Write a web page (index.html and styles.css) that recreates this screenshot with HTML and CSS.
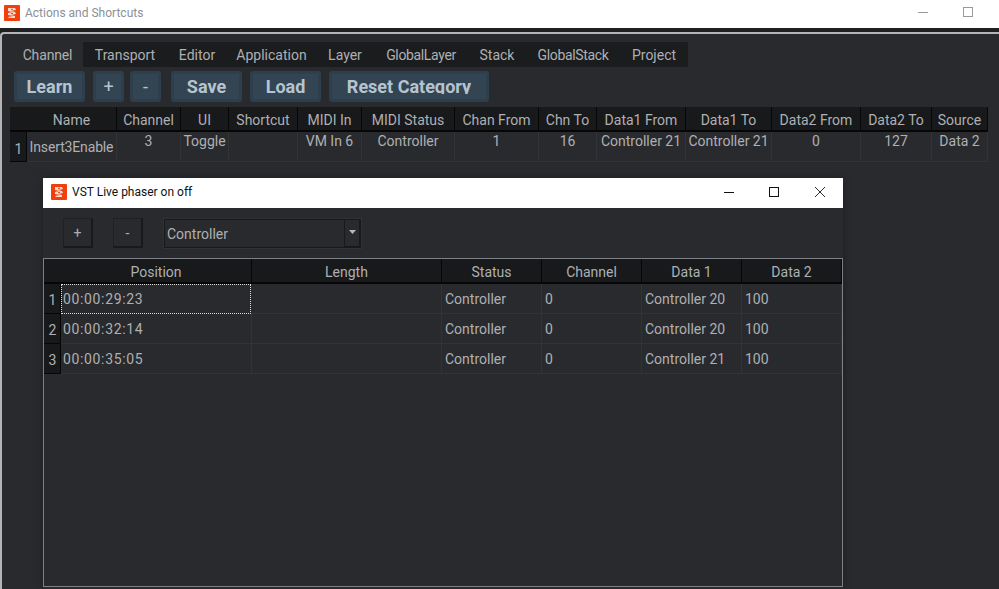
FILE: index.html
```html
<!DOCTYPE html>
<html lang="en">
<head>
<meta charset="utf-8">
<title>Actions and Shortcuts</title>
<link rel="stylesheet" href="styles.css">
</head>
<body>
<div class="main-title">
  <svg class="app-icon" viewBox="0 0 16 16"><rect width="16" height="16" rx="1" fill="#ee3f0c"/><path d="M4 3h7l1 2-5 1 4 1 1 2-5 1 4 1v2H5l-1-1 5-1-5-1V8l4-1-4-1z" fill="#f9d9cc"/><path d="M7 4.300h2M7 8.400h2" stroke="#ee3f0c"/></svg>
  <span class="main-title-text">Actions and Shortcuts</span>
  <svg class="wc-min" viewBox="0 0 10 10"><path d="M0 5.500h10" stroke="#9a9a9a"/></svg>
  <svg class="wc-max" viewBox="0 0 10 10"><rect x=".5" y=".5" width="9" height="9" fill="none" stroke="#9a9a9a"/></svg>
</div>
<div class="main-strip">
  <div class="main-frame">
    <div class="tabs">
      <div class="tab tab-active">Channel</div>
      <div class="tab-rest">
        <div class="tab t1">Transport</div>
        <div class="tab t2">Editor</div>
        <div class="tab t3">Application</div>
        <div class="tab t4">Layer</div>
        <div class="tab t5">GlobalLayer</div>
        <div class="tab t6">Stack</div>
        <div class="tab t7">GlobalStack</div>
        <div class="tab t8">Project</div>
      </div>
    </div>
    <div class="toolbar">
      <div class="btn btn-w">Learn</div>
      <div class="btn btn-s">+</div>
      <div class="btn btn-s btn-minus">-</div>
      <div class="btn btn-w">Save</div>
      <div class="btn btn-w">Load</div>
      <div class="btn btn-r"><span class="btn-label">Reset Category</span></div>
    </div>
    <div class="grid top-grid">
      <div class="hcell corner"></div>
      <div class="hcell">Name</div><div class="hcell">Channel</div><div class="hcell">UI</div><div class="hcell">Shortcut</div><div class="hcell">MIDI In</div><div class="hcell">MIDI Status</div><div class="hcell">Chan From</div><div class="hcell">Chn To</div><div class="hcell">Data1 From</div><div class="hcell">Data1 To</div><div class="hcell">Data2 From</div><div class="hcell">Data2 To</div><div class="hcell">Source</div>
      <div class="rowhead top-rowhead">1</div>
      <div class="cell name-cell">Insert3Enable</div><div class="cell">3</div><div class="cell">Toggle</div><div class="cell"></div><div class="cell">VM In 6</div><div class="cell">Controller</div><div class="cell">1</div><div class="cell">16</div><div class="cell">Controller 21</div><div class="cell">Controller 21</div><div class="cell">0</div><div class="cell">127</div><div class="cell">Data 2</div>
    </div>
  </div>
</div>

<div class="dialog">
  <div class="dlg-title">
    <svg class="app-icon" viewBox="0 0 16 16"><rect width="16" height="16" rx="1" fill="#ee3f0c"/><path d="M4 3h7l1 2-5 1 4 1 1 2-5 1 4 1v2H5l-1-1 5-1-5-1V8l4-1-4-1z" fill="#f9d9cc"/><path d="M7 4.300h2M7 8.400h2" stroke="#ee3f0c"/></svg>
    <span class="dlg-title-text">VST Live phaser on off</span>
    <svg class="dc dc-min" viewBox="0 0 10 10"><path d="M0 5.500h10" stroke="#111"/></svg>
    <svg class="dc dc-max" viewBox="0 0 10 10"><rect x=".5" y=".5" width="9" height="9" fill="none" stroke="#111"/></svg>
    <svg class="dc dc-close" viewBox="0 0 10 10"><path d="M0 0l10 10M10 0L0 10" stroke="#111" stroke-width=".9"/></svg>
  </div>
  <div class="dlg-tools">
    <div class="sq">+</div>
    <div class="sq">-</div>
    <div class="combo">
      <span class="combo-text">Controller</span>
      <span class="combo-arrow"><svg width="7" height="4" viewBox="0 0 7 4"><path d="M0 0h7L3.500 4z" fill="#b8b8b8"/></svg></span>
    </div>
  </div>
  <div class="dlg-table">
    <div class="grid ev-grid">
      <div class="hcell corner"></div>
      <div class="hcell">Position</div><div class="hcell">Length</div><div class="hcell">Status</div><div class="hcell">Channel</div><div class="hcell">Data 1</div><div class="hcell">Data 2</div>
      <div class="rowhead">1</div><div class="ecell ecell-focus time">00:00:29:23</div><div class="ecell"></div><div class="ecell">Controller</div><div class="ecell">0</div><div class="ecell">Controller 20</div><div class="ecell">100</div>
      <div class="rowhead">2</div><div class="ecell time">00:00:32:14</div><div class="ecell"></div><div class="ecell">Controller</div><div class="ecell">0</div><div class="ecell">Controller 20</div><div class="ecell">100</div>
      <div class="rowhead">3</div><div class="ecell time">00:00:35:05</div><div class="ecell"></div><div class="ecell">Controller</div><div class="ecell">0</div><div class="ecell">Controller 21</div><div class="ecell">100</div>
    </div>
  </div>
</div>
</body>
</html>
```

FILE: styles.css
```css
* { box-sizing: border-box; }
html, body { margin: 0; padding: 0; }
body {
  width: 999px;
  height: 589px;
  overflow: hidden;
  position: relative;
  background: #292a2d;
  font-family: Roboto, "Open Sans", sans-serif;
  font-size: 14px;
  color: #aeb0b3;
}

/* main window title bar */
.main-title {
  height: 28px;
  background: #fff;
  display: flex;
  align-items: center;
  position: relative;
  padding: 0 0 3px 4px;
}
.app-icon { width: 16px; height: 16px; flex: none; }
.main-title-text { margin-left: 5px; font-size: 12px; color: #8d9094; }
.wc-min, .wc-max { position: absolute; width: 10px; height: 10px; top: 7px; }
.wc-min { left: 918px; }
.wc-max { left: 963px; }

.main-strip {
  height: 561px;
  background: #1f2022;
  padding-top: 4px;
}
.main-frame {
  height: 557px;
  background: #292a2d;
  border-top: 2px solid #b4b4b4;
  border-left: 2px solid #b4b4b4;
  border-top-left-radius: 4px;
  padding: 8px 0 0 8px;
}

/* tabs */
.tabs { display: flex; height: 25px; margin-left: 4px; }
.tab { text-align: center; line-height: 27px; white-space: nowrap; }
.tab-active { width: 69px; line-height: 26px; letter-spacing: -.15px; padding-right: 2px; }
.tab-rest { display: flex; background: #1b1c1e; width: 605px; }
.t1 { width: 84px; } .t2 { width: 60px; } .t3 { width: 89px; } .t4 { width: 58px; }
.t5 { width: 94px; letter-spacing: -.35px; } .t6 { width: 58px; } .t7 { width: 94px; letter-spacing: -.35px; } .t8 { width: 68px; }

/* toolbar */
.toolbar { display: flex; height: 31px; margin: 4px 0 5px 4px; }
.btn {
  height: 31px;
  background: #334553;
  border: 3px solid #2d3f4d;
  border-radius: 3px;
  color: #b7c4cf;
  font-weight: 700;
  font-size: 18px;
  line-height: 26px;
  text-align: center;
  white-space: nowrap;
  margin-right: 8px;
}
.btn-label { display: block; height: 20px; overflow: hidden; }
.btn-w { width: 71px; }
.btn-s { width: 31px; font-weight: 400; }
.btn-minus { margin-left: -2px; margin-right: 10px; }
.btn-r { width: 160px; }

/* grids */
.grid { display: grid; }
.top-grid {
  width: 978px;
  grid-template-columns: 17px 90px 64px 48px 69px 64px 93px 84px 58px 89px 86px 89px 71px 56px;
  grid-template-rows: 25px 30px;
}
.ev-grid {
  grid-template-columns: 17px 191px 190px 100px 100px 100px 100px;
  grid-template-rows: 25px 30px 30px 30px;
}
.hcell {
  background: #18191b;
  border-right: 1px solid #060607;
  border-bottom: 2px solid #060607;
  text-align: center;
  line-height: 26px;
  white-space: nowrap;
  overflow: hidden;
}
.corner { border-right: none; }
.rowhead {
  background: #18191b;
  border-right: 1px solid #060607;
  border-bottom: 1px solid #060607;
  padding-left: 1px;
  text-align: center;
  line-height: 32px;
}
.top-rowhead { line-height: 34px; }
.cell {
  border-right: 1px solid #323336;
  border-bottom: 1px solid #323336;
  text-align: center;
  line-height: 18px;
  white-space: nowrap;
  overflow: hidden;
}
.name-cell { line-height: 30px; letter-spacing: -.15px; }

/* dialog */
.dialog {
  position: absolute;
  left: 43px;
  top: 178px;
  width: 800px;
  height: 411px;
  background: #292a2d;
  box-shadow: 0 0 8px rgba(0, 0, 0, .28);
}
.dlg-title {
  height: 30px;
  background: #fff;
  display: flex;
  align-items: center;
  padding: 0 0 2px 8px;
  position: relative;
}
.dlg-title-text { margin-left: 5px; font-size: 12px; color: #111; }
.dc { position: absolute; width: 10px; height: 10px; top: 9px; }
.dc-min { left: 681px; }
.dc-max { left: 726px; }
.dc-close { left: 772px; }

.dlg-tools {
  display: flex;
  height: 50px;
  padding: 10px 0 0 20px;
}
.sq {
  width: 30px;
  height: 30px;
  background: #292a2d;
  border: 1px solid #1f2022;
  border-right: 2px solid #18191b;
  border-bottom: 2px solid #18191b;
  text-align: center;
  line-height: 29px;
  margin-right: 20px;
}
.combo {
  width: 199px;
  height: 31px;
  border: 2px solid #18191b;
  outline: 1px solid #303134;
  outline-offset: -1px;
  display: flex;
  align-items: center;
  justify-content: space-between;
  padding-left: 2px;
}
.combo-arrow {
  width: 16px;
  height: 27px;
  background: #292a2d;
  border-left: 1px solid #18191b;
  border-right: 1px solid #18191b;
  border-bottom: 1px solid #18191b;
  display: flex;
  justify-content: center;
  padding-top: 10px;
}
.combo-arrow svg { display: block; }

.dlg-table {
  height: 329px;
  border: 1px solid #7f8085;
}
.ecell {
  border-right: 1px solid #323336;
  border-bottom: 1px solid #323336;
  padding-left: 3px;
  line-height: 31px;
  white-space: nowrap;
  overflow: hidden;
}
.time { padding-left: 2px; letter-spacing: .65px; }
.ecell-focus { border: 1px dotted #dcdcdc; padding-left: 1px; line-height: 29px; margin-right: 1px; }
```
